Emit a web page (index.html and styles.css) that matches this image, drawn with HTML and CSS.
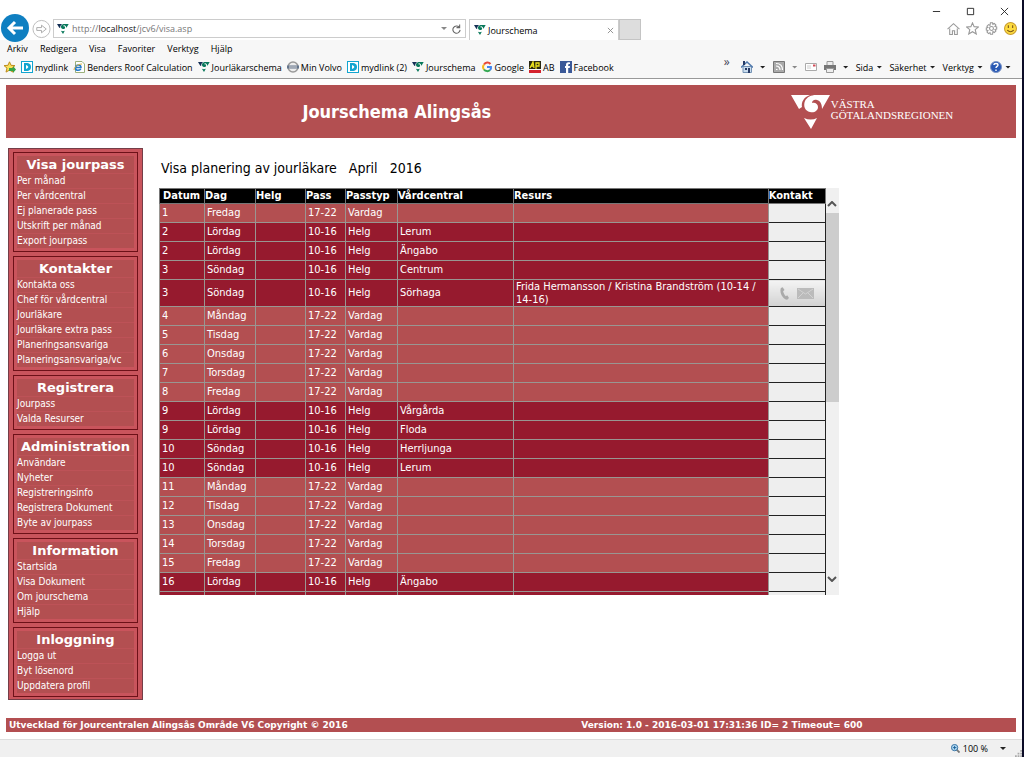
FILE: index.html
```html
<!DOCTYPE html>
<html lang="sv">
<head>
<meta charset="utf-8">
<title>Jourschema</title>
<link rel="stylesheet" href="styles.css">
</head>
<body>
<svg class="defs" aria-hidden="true">
  <symbol id="vg" viewBox="0 0 40 36"><path class="vg-a" d="M0 1h19C13 3 10 8 11 13l-3 2z"/><path class="vg-b" d="M39 1 31 15C31 11 30 7 26 6c-3-1-5 1-5 3 3-1 6 1 6 4 0 4-4 6-8 5-5-1-7-6-5-11C16 3 20 1 25 1zM13 24q7 3 13 0l-6 11z"/></symbol>
  <symbol id="dlink" viewBox="0 0 12 12"><path fill="#12a5d0" d="M0 0h12v12H0z"/><path fill="#fff" d="M1 1h10v10H1z"/><path fill="#12a5d0" d="M3 2h2c4 0 5 2 5 4s-1 4-5 4H3z"/><path fill="#fff" d="M5 4c3 1 3 3 0 4z"/></symbol>
</svg>

<header class="browser">
  <div class="window-buttons">
    <button aria-label="Minimera"><svg viewBox="0 0 10 10"><path d="M1 5h8"/></svg></button>
    <button aria-label="Maximera"><svg viewBox="0 0 10 10"><path d="M1.500 1.500h7v7h-7z"/></svg></button>
    <button aria-label="Stäng"><svg viewBox="0 0 10 10"><path d="m1 1 8 8M9 1 1 9"/></svg></button>
  </div>
  <div class="nav">
    <button class="back" aria-label="Bakåt"><svg viewBox="0 0 28 28"><circle cx="14" cy="14" r="14" fill="#0f7fc1"/><path d="M22 14H8M14 8l-6 6 6 6" fill="none" stroke="#fff" stroke-width="3"/></svg></button>
    <button class="forward" aria-label="Framåt"><svg viewBox="0 0 20 20"><circle cx="10" cy="10" r="9" fill="#fff" stroke="#bbb"/><path d="M5 8.500h5V6l5 4-5 4v-2.500H5z" fill="none" stroke="#aaa"/></svg></button>
    <div class="address">
      <svg class="mark"><use href="#vg"/></svg>
      <a href="#">http://<b>localhost</b>/jcv6/visa.asp</a>
      <i class="caret light"></i>
      <button aria-label="Uppdatera"><svg class="reload" viewBox="0 0 10 10"><path d="M8 3a4 4 0 1 0 1 3M8.500 0v3.500H5" fill="none" stroke="#666" stroke-width="1.200"/></svg></button>
    </div>
    <div class="tab"><svg class="mark"><use href="#vg"/></svg><span>Jourschema</span><button aria-label="Stäng flik"><svg viewBox="0 0 8 8"><path d="m1 1 6 6M7 1 1 7" stroke="#888"/></svg></button></div>
    <button class="new-tab" aria-label="Ny flik"></button>
    <div class="tools">
      <button aria-label="Startsida"><svg viewBox="0 0 12 12" fill="none" stroke="#999"><path d="m.5 6.500 5.500-5 5.500 5M2.500 6v5.500H5V8h2v3.500h2.500V6"/></svg></button>
      <button aria-label="Favoriter"><svg viewBox="0 0 12 12" fill="none" stroke="#999"><path d="m6 .8 1.500 3.500 4 .3-3 2.500 1 4L6 9l-3.500 2.100 1-4-3-2.500 4-.3z"/></svg></button>
      <button aria-label="Inställningar"><svg viewBox="0 0 12 12" fill="none" stroke="#999"><circle cx="6" cy="6" r="1.800"/><path d="M5 .7h2l.3 1.500 1.300-.8 1.500 1.500-.9 1.200 1.600.4v2l-1.600.4.9 1.300-1.500 1.500-1.300-.9L7 11.300H5l-.4-1.500-1.300.9-1.500-1.500.9-1.300-1.500-.4v-2l1.500-.4-.9-1.200 1.500-1.500 1.300.8z"/></svg></button>
      <button aria-label="Feedback"><svg viewBox="0 0 12 12"><circle cx="6" cy="6" r="5.500" fill="#fddb3f" stroke="#c99c2f"/><path d="M4 3v2.500M8 3v2.500M3 7.500c2 2 4 2 6 0" fill="none" stroke="#785318"/></svg></button>
    </div>
  </div>
  <nav class="menu"><a href="#">Arkiv</a><a href="#">Redigera</a><a href="#">Visa</a><a href="#">Favoriter</a><a href="#">Verktyg</a><a href="#">Hjälp</a></nav>
  <div class="links">
    <nav class="favourites">
      <button aria-label="Lägg till favorit"><svg viewBox="0 0 12 12"><path fill="#f8e05a" stroke="#bd8b1c" d="m5.500.8 1.500 3.500 4 .3-3 2.500 1 4-3.500-2-3.500 2 1-4-3-2.500 4-.3z"/><path fill="#37a545" d="M5 7h4V5l3 3.500L9 12v-2H5z"/></svg></button>
      <a href="#"><svg><use href="#dlink"/></svg>mydlink</a>
      <a href="#"><svg viewBox="0 0 12 12"><path fill="#fff" stroke="#9bb07b" d="M2.500.5H9l2.500 2.500v8.500h-9z"/><path d="M2 6.500h6C8 3 3 3 2.500 6.500S6 10 8 8" fill="none" stroke="#257ccb" stroke-width="1.500"/><path d="M1 9C1 6 5 3 9 3" fill="none" stroke="#e2b63b"/></svg>Benders Roof Calculation</a>
      <a href="#"><svg class="mark"><use href="#vg"/></svg>Jourläkarschema</a>
      <a href="#"><svg viewBox="0 0 12 12"><circle cx="6" cy="6" r="5" fill="#eee" stroke="#999" stroke-width="1.500"/><path d="M0 4.500h12v3H0z" fill="#64758c"/><path d="M2 6h8" stroke="#ddd"/></svg>Min Volvo</a>
      <a href="#"><svg><use href="#dlink"/></svg>mydlink (2)</a>
      <a href="#"><svg class="mark"><use href="#vg"/></svg>Jourschema</a>
      <a href="#"><svg viewBox="0 0 12 12" fill="none" stroke-width="2"><path d="M9.500 3A4 4 0 0 0 3 3.500" stroke="#e74838"/><path d="M3 3.500a4 4 0 0 0 0 5" stroke="#f5b91b"/><path d="M3 8.500A4 4 0 0 0 9 9" stroke="#35a853"/><path d="M9 9c1-1 1.200-2 1-3H6" stroke="#4284ee"/></svg>Google</a>
      <a href="#"><svg viewBox="0 0 12 12"><path fill="#292711" d="M0 0h12v8H0z"/><path d="m1 7 3-6 1 6M2 5h3M7 8V2h3v3H7" fill="none" stroke="#ece21d" stroke-width="1.300"/><path fill="#d4212c" d="M0 9h12v3H0z"/></svg>AB</a>
      <a href="#"><svg viewBox="0 0 12 12"><path fill="#3b5998" d="M0 0h12v12H0z"/><path fill="#fff" d="M6 12V7H5V5h1V4c0-2 1-3 4-2.500v1.600c-1.500 0-1.800.2-1.800.9v1H10l-.3 2H8.200v5z"/></svg>Facebook</a>
    </nav>
    <div class="commands">
      <span class="more">»</span>
      <button aria-label="Hem"><svg viewBox="0 0 12 12"><path fill="#c9dcee" stroke="#7593b4" d="M2 5.500h8.500v6H2z"/><path d="M0 6.500 6 1l6 5.500" fill="none" stroke="#517aad" stroke-width="1.500"/><path fill="#263a65" d="M2 0h2v4H2zM7 7h2v5H7zM4 7h2v2H4z"/></svg></button><i class="caret"></i>
      <button class="feed" aria-label="Flöden"><svg viewBox="0 0 12 12"><path fill="#aaa" stroke="#777" d="M.5.5h11v11H.5z"/><path d="M3 5c2.500 0 4 1.500 4 4M3 2.500c4 0 6.500 2.500 6.500 6.500M3 8.500h1.500" fill="none" stroke="#fff" stroke-width="1.200"/></svg></button><i class="caret light"></i>
      <button aria-label="Läs e-post"><svg viewBox="0 0 12 12"><path fill="#fff" stroke="#aaa" d="M.5 2.500h11v7H.5z"/><path stroke="#ccc" d="M2 5h4M2 7h4"/><path fill="#d34d58" d="M8 3.500h2.500v2H8z"/></svg></button>
      <button class="print" aria-label="Skriv ut"><svg viewBox="0 0 12 12"><path fill="#eee" stroke="#999" d="M3 .5h6V5H3z"/><path fill="#777" d="M0 4h12v5H0z"/><path fill="#eee" stroke="#999" d="M2.500 7.500h7v4h-7z"/></svg></button><i class="caret"></i>
      <a href="#">Sida<i class="caret"></i></a><a href="#">Säkerhet<i class="caret"></i></a><a href="#">Verktyg<i class="caret"></i></a>
      <button class="help" aria-label="Hjälp"><svg viewBox="0 0 12 12"><circle cx="6" cy="6" r="5.500" fill="#2858b4" stroke="#7d95c5"/><path d="M4 4c0-2 4-2 4 0 0 1.500-2 1.300-2 3M6 8.500V10" fill="none" stroke="#fff" stroke-width="1.400"/></svg></button><i class="caret"></i>
    </div>
  </div>
</header>

<div class="page">
  <header class="banner">
    <h1>Jourschema Alingsås</h1>
    <div class="brand"><svg viewBox="0 0 40 36"><use href="#vg"/></svg><span>VÄSTRA<br>GÖTALANDSREGIONEN</span></div>
  </header>
  <div class="columns">
    <nav class="sidebar">
      <section><h2>Visa jourpass</h2><a href="#">Per månad</a><a href="#">Per vårdcentral</a><a href="#">Ej planerade pass</a><a href="#">Utskrift per månad</a><a href="#">Export jourpass</a></section>
      <section><h2>Kontakter</h2><a href="#">Kontakta oss</a><a href="#">Chef för vårdcentral</a><a href="#">Jourläkare</a><a href="#">Jourläkare extra pass</a><a href="#">Planeringsansvariga</a><a href="#">Planeringsansvariga/vc</a></section>
      <section><h2>Registrera</h2><a href="#">Jourpass</a><a href="#">Valda Resurser</a></section>
      <section><h2>Administration</h2><a href="#">Användare</a><a href="#">Nyheter</a><a href="#">Registreringsinfo</a><a href="#">Registrera Dokument</a><a href="#">Byte av jourpass</a></section>
      <section><h2>Information</h2><a href="#">Startsida</a><a href="#">Visa Dokument</a><a href="#">Om jourschema</a><a href="#">Hjälp</a></section>
      <section><h2>Inloggning</h2><a href="#">Logga ut</a><a href="#">Byt lösenord</a><a href="#">Uppdatera profil</a></section>
    </nav>
    <main>
      <p class="heading"><span>Visa planering av jourläkare</span><span>April</span><span>2016</span></p>
      <div class="pane">
        <div class="clip">
        <table>
          <colgroup><col class="c-date"><col class="c-helg"><col class="c-day"><col class="c-pass"><col class="c-type"><col class="c-centre"><col><col class="c-contact"></colgroup>
          <thead><tr><th>Datum</th><th>Dag</th><th>Helg</th><th>Pass</th><th>Passtyp</th><th>Vårdcentral</th><th>Resurs</th><th>Kontakt</th></tr></thead>
          <tbody>
            <tr><td>1</td><td>Fredag</td><td></td><td>17-22</td><td>Vardag</td><td></td><td></td><td></td></tr>
            <tr class="helg"><td>2</td><td>Lördag</td><td></td><td>10-16</td><td>Helg</td><td>Lerum</td><td></td><td></td></tr>
            <tr class="helg"><td>2</td><td>Lördag</td><td></td><td>10-16</td><td>Helg</td><td>Ängabo</td><td></td><td></td></tr>
            <tr class="helg"><td>3</td><td>Söndag</td><td></td><td>10-16</td><td>Helg</td><td>Centrum</td><td></td><td></td></tr>
            <tr class="helg"><td>3</td><td>Söndag</td><td></td><td>10-16</td><td>Helg</td><td>Sörhaga</td><td class="names">Frida Hermansson / Kristina Brandström (10-14 / 14-16)</td><td class="actions"><div><button aria-label="Ring"><svg viewBox="0 0 10 14"><path fill="#aaa" d="M1 1l2-1 2 3-1.500 1.500C4 7 5 8.500 6.500 10L8 9l2 3-2 2C3 13-1 6 1 1z"/></svg></button><button aria-label="E-post"><svg class="mail" viewBox="0 0 17 11"><path fill="#bbb" d="M0 0h17v11H0z"/><path d="m1 1 7.500 5L16 1M1 10l5-5M16 10l-5-5" fill="none" stroke="#d2d2d2"/></svg></button></div></td></tr>
            <tr><td>4</td><td>Måndag</td><td></td><td>17-22</td><td>Vardag</td><td></td><td></td><td></td></tr>
            <tr><td>5</td><td>Tisdag</td><td></td><td>17-22</td><td>Vardag</td><td></td><td></td><td></td></tr>
            <tr><td>6</td><td>Onsdag</td><td></td><td>17-22</td><td>Vardag</td><td></td><td></td><td></td></tr>
            <tr><td>7</td><td>Torsdag</td><td></td><td>17-22</td><td>Vardag</td><td></td><td></td><td></td></tr>
            <tr><td>8</td><td>Fredag</td><td></td><td>17-22</td><td>Vardag</td><td></td><td></td><td></td></tr>
            <tr class="helg"><td>9</td><td>Lördag</td><td></td><td>10-16</td><td>Helg</td><td>Vårgårda</td><td></td><td></td></tr>
            <tr class="helg"><td>9</td><td>Lördag</td><td></td><td>10-16</td><td>Helg</td><td>Floda</td><td></td><td></td></tr>
            <tr class="helg"><td>10</td><td>Söndag</td><td></td><td>10-16</td><td>Helg</td><td>Herrljunga</td><td></td><td></td></tr>
            <tr class="helg"><td>10</td><td>Söndag</td><td></td><td>10-16</td><td>Helg</td><td>Lerum</td><td></td><td></td></tr>
            <tr><td>11</td><td>Måndag</td><td></td><td>17-22</td><td>Vardag</td><td></td><td></td><td></td></tr>
            <tr><td>12</td><td>Tisdag</td><td></td><td>17-22</td><td>Vardag</td><td></td><td></td><td></td></tr>
            <tr><td>13</td><td>Onsdag</td><td></td><td>17-22</td><td>Vardag</td><td></td><td></td><td></td></tr>
            <tr><td>14</td><td>Torsdag</td><td></td><td>17-22</td><td>Vardag</td><td></td><td></td><td></td></tr>
            <tr><td>15</td><td>Fredag</td><td></td><td>17-22</td><td>Vardag</td><td></td><td></td><td></td></tr>
            <tr class="helg"><td>16</td><td>Lördag</td><td></td><td>10-16</td><td>Helg</td><td>Ängabo</td><td></td><td></td></tr>
            <tr class="helg"><td></td><td></td><td></td><td></td><td></td><td></td><td></td><td></td></tr>
          </tbody>
        </table>
        </div>
        <div class="scrollbar">
          <button aria-label="Rulla upp"><svg viewBox="0 0 10 6"><path d="m1 5 4-4 4 4"/></svg></button>
          <div class="track"><div class="thumb"></div></div>
          <button aria-label="Rulla ned"><svg viewBox="0 0 10 6"><path d="m1 1 4 4 4-4"/></svg></button>
        </div>
      </div>
    </main>
  </div>
  <footer class="credits"><span>Utvecklad för Jourcentralen Alingsås Område V6 Copyright © 2016</span><span>Version: 1.0 - 2016-03-01 17:31:36 ID= 2 Timeout= 600</span></footer>
</div>

<footer class="status">
  <button><svg viewBox="0 0 10 10"><path d="m6 6 3.500 3.500" stroke="#777" stroke-width="2"/><circle cx="4" cy="4" r="3.500" fill="#b8def5" stroke="#26679c"/><path d="M2 4h4M4 2v4" stroke="#145b96"/></svg>100 %<i class="caret"></i></button>
  <svg class="grip" viewBox="0 0 8 8"><path fill="#aaa" d="M6 0h2v2H6zM3 3h2v2H3zM6 3h2v2H6zM0 6h2v2H0zM3 6h2v2H3zM6 6h2v2H6z"/></svg>
</footer>
</body>
</html>
```
FILE: styles.css
```css
* { box-sizing: border-box; }
body {
  margin: 0;
  min-height: 100vh;
  display: flex;
  flex-direction: column;
  background: #fff;
  border-right: 2px solid #0b0b26;
  font-family: "DejaVu Sans Condensed", "Noto Sans", sans-serif;
  font-size: 11px;
  color: #000;
}
a { color: inherit; text-decoration: none; }
button { border: 0; padding: 0; background: none; font: inherit; color: inherit; display: flex; align-items: center; justify-content: center; }
svg { display: block; flex: none; }
.defs { position: absolute; width: 0; height: 0; }
.vg-a { fill: var(--vg-a, #142f55); }
.vg-b { fill: var(--vg-b, #08785a); }
.mark { width: 12px; height: 12px; }
.caret { flex: none; width: 6px; height: 3px; background: #222; clip-path: polygon(0 0, 100% 0, 50% 100%); }
.caret.light { background: #888; }

/* browser frame */
.browser { background: #f7f7f7; border-bottom: 1px solid #999; font-family: "Open Sans", sans-serif; font-size: 9px; }
.window-buttons { height: 17px; padding: 5px 13px 0 0; display: flex; justify-content: flex-end; gap: 25px; background: #fff; }
.window-buttons svg { width: 9px; height: 9px; fill: none; stroke: #222; }
.nav { height: 23px; display: flex; align-items: flex-end; background: #fff; }
.back { align-self: flex-start; margin: -3px 3px 0 1px; }
.back svg { width: 28px; height: 28px; }
.forward { margin: 0 2px 1px 0; }
.forward svg { width: 19px; height: 20px; }
.address { flex: 0 1 413px; height: 19px; margin: 0 3px 2px 0; padding: 0 4px 0 3px; border: 1px solid #ccc; display: flex; align-items: center; gap: 3px; color: #777; }
.address a { flex: 1; }
.address b { color: #111; font-weight: 400; }
.reload { width: 9px; height: 10px; margin-left: 2px; }
.tab { flex: 0 1 150px; height: 21px; padding: 0 4px; border: 1px solid #ccc; border-bottom: 0; display: flex; align-items: center; gap: 2px; }
.tab span { flex: 1; }
.tab svg:not(.mark) { width: 7px; height: 7px; }
.new-tab { width: 22px; height: 21px; background: #ddd; border: 1px solid #c4c4c4; }
.tools { margin-left: auto; padding: 0 5px 5px 0; display: flex; gap: 6px; }
.tools svg { width: 13px; height: 13px; }
.menu { height: 17px; padding-left: 7px; display: flex; align-items: center; gap: 12px; }
.links { height: 21px; padding-bottom: 1px; display: flex; justify-content: space-between; align-items: center; }
.favourites { display: flex; align-items: center; gap: 5px; padding-left: 4px; white-space: nowrap; }
.favourites a { display: flex; align-items: center; gap: 2px; }
.favourites svg { width: 12px; height: 12px; }
.commands { display: flex; align-items: center; gap: 7px; padding-right: 11px; white-space: nowrap; }
.commands svg { width: 12px; height: 12px; }
.commands a { display: flex; align-items: center; gap: 3px; }
.more { align-self: flex-start; color: #445; margin-right: 4px; font-size: 12px; line-height: 2px; }
.help + .caret { margin-left: -4px; }

/* application */
.page { flex: 1; display: flex; flex-direction: column; padding: 6px 6px 7px; }
.banner { height: 53px; display: grid; grid-template-columns: 77% 1fr; column-gap: 7px; align-items: center; background: #b34f51; color: #fff; }
.banner h1 { margin: 0; padding-left: 4px; text-align: center; font-size: 18px; font-weight: 700; }
.brand { --vg-a: #fff; --vg-b: #fff; display: flex; font: 11px/11px "Liberation Serif", serif; }
.brand > svg { width: 40px; height: 36px; }
.brand span { padding-top: 5px; }
.columns { flex: 1; display: flex; align-items: flex-start; gap: 16px; padding: 10px 2px 0; }
.sidebar { flex: none; width: 135px; padding: 3px 4px 2px; border: 1px solid #743e48; background: #c9545c; display: flex; flex-direction: column; gap: 4px; color: #fff; }
.sidebar section { border: 1px solid #6d1118; padding: 3px; font-size: 10px; background: linear-gradient(#b34f51, #b34f51) content-box; }
.sidebar h2 { margin: 0; font: 700 13px/17px "DejaVu Sans", sans-serif; text-align: center; }
.sidebar a { display: block; height: 15px; line-height: 14px; border-top: 1px solid #bd5257; white-space: nowrap; }
main { flex: 1; min-width: 0; }
.heading { margin: 10px 0; padding-left: 2px; display: flex; gap: 12px; font-size: 14px; line-height: 20px; }
.pane { width: 79.5%; height: 407px; display: flex; }
.clip { flex: 1; min-width: 0; overflow: hidden; }
table { width: 100%; table-layout: fixed; border-collapse: collapse; color: #fff; }
.c-date { width: 45px; }
.c-day { width: 50px; }
.c-helg { width: 51px; }
.c-pass { width: 40px; }
.c-type { width: 52px; }
.c-centre { width: 116px; }
.c-contact { width: 57px; }
th { height: 15px; padding: 0; background: #000; border: 1px solid #777; line-height: 14px; text-align: left; }
th:first-child { padding-left: 3px; }
td { height: 19px; padding: 0 2px; background: #b34f51; border: 1px solid #999692; line-height: 14px; }
.helg td { background: #961a2e; }
td:last-child, .helg td:last-child { background: #eee; border-color: #222; }
td.names { line-height: 13px; }
.helg td.actions { padding: 0; background: linear-gradient(#f4f4f4, #d2d2d2); }
.actions div { display: flex; justify-content: center; align-items: center; gap: 8px; }
.actions svg { width: 9px; height: 13px; }
.actions .mail { width: 17px; height: 11px; }
.scrollbar { flex: none; width: 13px; display: flex; flex-direction: column; background: #f0f0f0; }
.scrollbar button { height: 25px; padding-top: 6px; }
.scrollbar button:last-child { height: 32px; padding: 0; }
.scrollbar svg { width: 10px; height: 6px; fill: none; stroke: #555; stroke-width: 2; }
.track { flex: 1; }
.thumb { height: 54%; background: #cdcdcd; }
.credits { display: grid; grid-template-columns: 57% 1fr; padding: 0 3px; background: #b34f51; color: #fff; font: 700 9px/14px "DejaVu Sans", sans-serif; white-space: nowrap; }
.status { height: 18px; display: flex; justify-content: flex-end; align-items: center; gap: 9px; border-top: 1px solid #ddd; background: #f0f0f0; font: 9px "Open Sans", sans-serif; }
.status button { gap: 3px; }
.status button svg { width: 9px; height: 9px; }
.status .caret { margin-left: 9px; }
.grip { width: 7px; height: 7px; align-self: flex-end; }
```
